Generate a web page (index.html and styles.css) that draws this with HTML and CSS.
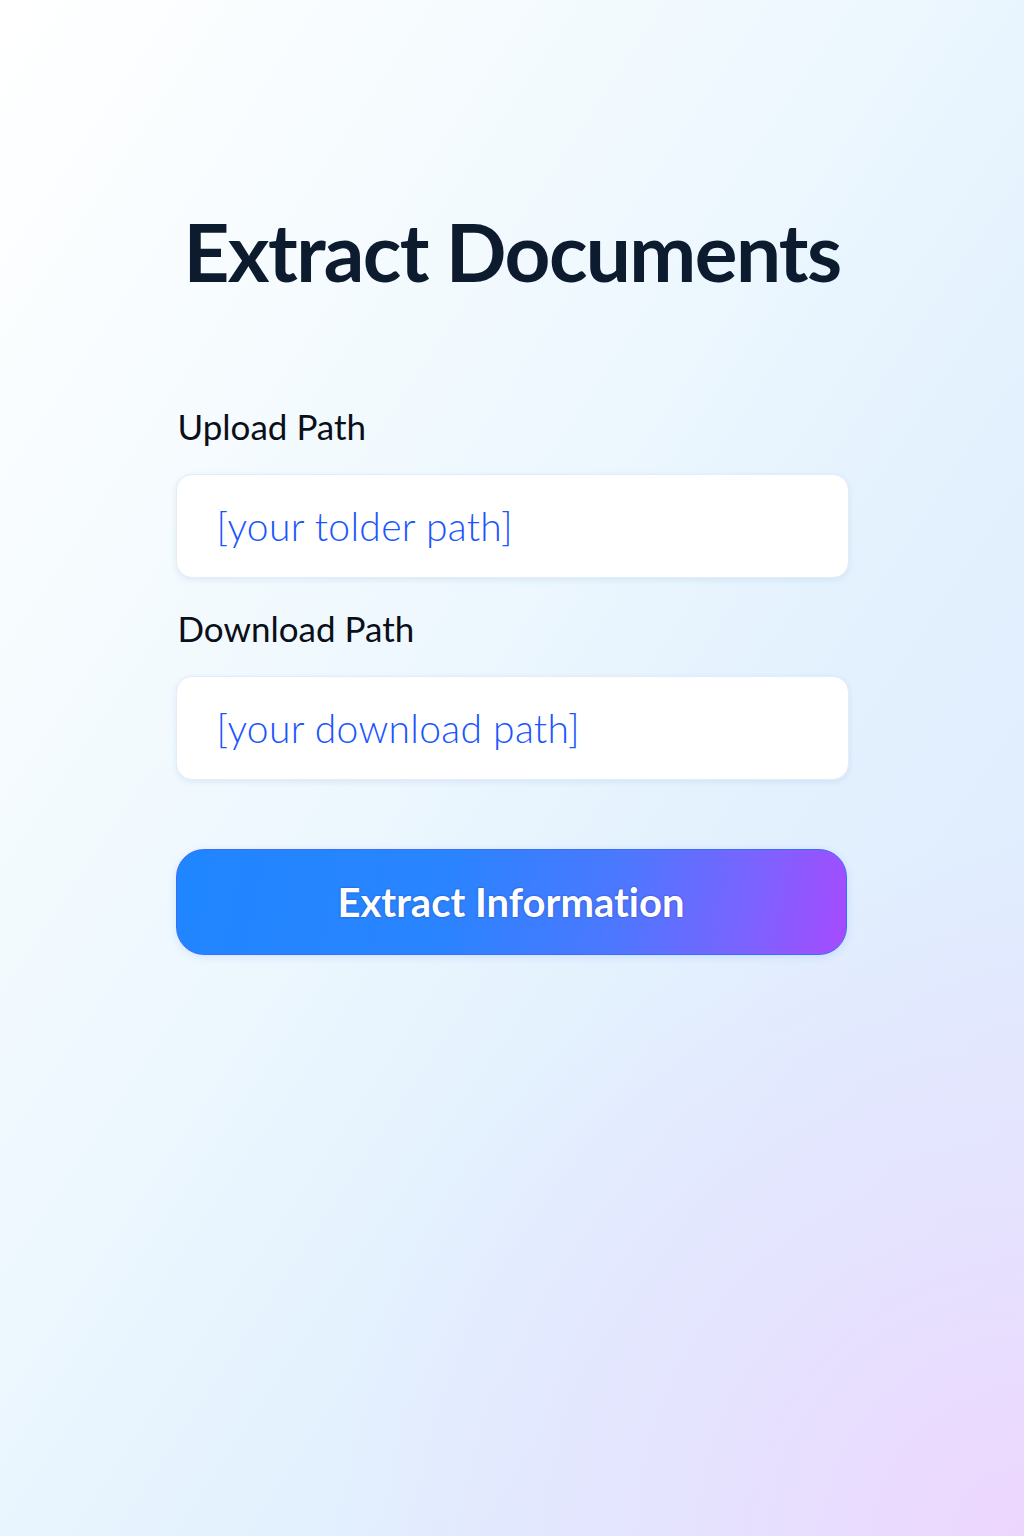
FILE: index.html
```html
<!DOCTYPE html>
<html lang="en">
<head>
<meta charset="utf-8">
<title>Extract Documents</title>
<link rel="stylesheet" href="styles.css">
</head>
<body>
<main class="page">
  <h1 class="title">Extract Documents</h1>
  <form class="form">
    <div class="field">
      <label class="label" for="upload">Upload Path</label>
      <div class="input-box" id="upload"><span class="placeholder">[your tolder path]</span></div>
    </div>
    <div class="field">
      <label class="label" for="download">Download Path</label>
      <div class="input-box" id="download"><span class="placeholder">[your download path]</span></div>
    </div>
    <button type="button" class="btn">Extract Information</button>
  </form>
</main>
</body>
</html>
```
FILE: styles.css
```css
html, body {
  margin: 0;
  padding: 0;
}
body {
  min-height: 1536px;
  background:
    radial-gradient(ellipse 70% 45% at 100% 100%, rgba(237, 214, 254, 1) 0%, rgba(232, 220, 254, 0.6) 45%, rgba(232, 220, 254, 0) 100%),
    linear-gradient(to bottom right, #ffffff 0%, #f5fbfe 25%, #ecf7fe 45%, #e4f2fe 60%, #e0eefe 75%, #e2e8fe 100%);
  font-family: "Lato", "Inter", sans-serif;
  font-variant-ligatures: none;
  color: #0b1a2c;
}
.page {
  width: 673px;
  margin: 0 auto;
  padding-top: 203px;
}
.title {
  margin: 0;
  text-align: center;
  white-space: nowrap;
  font-family: "Lato", sans-serif;
  font-weight: 700;
  font-size: 80px;
  line-height: 96px;
  letter-spacing: -1.6px;
  color: #0d1b2e;
}
.form {
  display: flex;
  flex-direction: column;
  margin-top: 107px;
}
.field {
  display: flex;
  flex-direction: column;
}
.field + .field {
  margin-top: 30px;
}
.label {
  font-size: 35px;
  line-height: 40px;
  font-weight: 400;
  color: #0a0f1a;
  padding-left: 2px;
  margin-bottom: 28px;
}
.input-box {
  height: 104px;
  box-sizing: border-box;
  background: #ffffff;
  border: 1px solid #e3edf8;
  border-radius: 16px;
  box-shadow: 0 2px 6px rgba(120, 160, 210, 0.18);
  display: flex;
  align-items: center;
  padding-left: 40px;
}
.placeholder {
  font-family: "Lato", sans-serif;
  font-weight: 300;
  font-size: 39px;
  letter-spacing: 0.3px;
  color: #1a55ff;
}
.btn {
  margin-top: 69px;
  height: 106px;
  width: 671px;
  border-radius: 28px;
  border: 1px solid #3a6cff;
  background: linear-gradient(100deg, #1f86ff 0%, #2a84ff 40%, #4b78ff 65%, #7b63ff 85%, #a64bff 100%);
  color: #ffffff;
  font-family: "Lato", sans-serif;
  font-weight: 700;
  font-size: 40px;
  font-variant-ligatures: none;
  text-shadow: 0 0 2px rgba(20, 30, 120, 0.6);
  cursor: pointer;
  box-shadow: 0 2px 8px rgba(60, 120, 255, 0.15);
}
```
